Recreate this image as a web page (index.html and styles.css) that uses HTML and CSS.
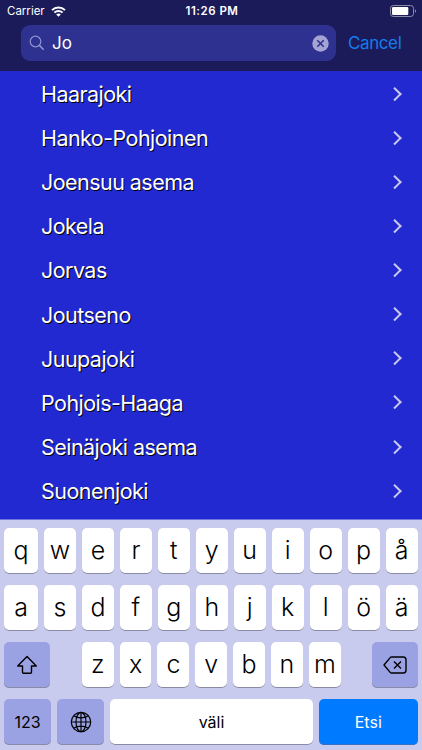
FILE: index.html
```
<!DOCTYPE html>
<html lang="fi">

<head>
    <meta charset="UTF-8">
    <title>Asemat</title>
    <link rel="stylesheet" href="styles.css">
</head>

<body>
    <header class="header">
        <div class="status-bar">
            <div class="carrier">
                <span>Carrier</span>
                <svg width="15" height="11" viewBox="0 0 15 11" fill="none" stroke="#fff" stroke-width="2">
                    <path d="M1 4.1a9.3 9.3 0 0 1 13 0M3.4 6.6a5.9 5.9 0 0 1 8.2 0" />
                    <path d="M7.5 10.8L5.2 8.5a3.3 3.3 0 0 1 4.6 0z" fill="#fff" stroke="none" />
                </svg>
            </div>
            <span class="time">11:26 PM</span>
            <svg class="battery" width="27" height="12" viewBox="0 0 27 12">
                <rect x="0.5" y="0.5" width="23" height="11" rx="2.8" fill="none" stroke="#8b8ca9" />
                <rect x="2" y="2" width="16.3" height="8" rx="1.2" fill="#fff" />
                <path d="M25 4.2a2 2 0 0 1 0 3.6z" fill="#8b8ca9" />
            </svg>
        </div>
        <div class="search-bar">
            <div class="search-field">
                <svg width="16" height="16" viewBox="0 0 16 16" fill="none" stroke="#9092ce" stroke-width="1.2">
                    <circle cx="6.5" cy="6.5" r="5.3" />
                    <path d="M10.4 10.4l4.3 4.3" stroke-width="1.6" />
                </svg>
                <span class="query">Jo</span>
                <svg width="17" height="17" viewBox="0 0 17 17">
                    <circle cx="8.5" cy="8.5" r="8.2" fill="#a3a4d3" />
                    <path d="M5.3 5.3l6.4 6.4M11.7 5.3l-6.4 6.4" stroke="#2e318e" stroke-width="1.6" />
                </svg>
            </div>
            <span class="cancel">Cancel</span>
        </div>
    </header>

    <ul class="stations">
        <li>Haarajoki</li>
        <li>Hanko-Pohjoinen</li>
        <li>Joensuu asema</li>
        <li>Jokela</li>
        <li>Jorvas</li>
        <li>Joutseno</li>
        <li>Juupajoki</li>
        <li>Pohjois-Haaga</li>
        <li>Seinäjoki asema</li>
        <li>Suonenjoki</li>
    </ul>

    <div class="keyboard">
        <div class="keys">
            <div class="key">q</div>
            <div class="key">w</div>
            <div class="key">e</div>
            <div class="key">r</div>
            <div class="key">t</div>
            <div class="key">y</div>
            <div class="key">u</div>
            <div class="key">i</div>
            <div class="key">o</div>
            <div class="key">p</div>
            <div class="key">å</div>
        </div>
        <div class="keys">
            <div class="key">a</div>
            <div class="key">s</div>
            <div class="key">d</div>
            <div class="key">f</div>
            <div class="key">g</div>
            <div class="key">h</div>
            <div class="key">j</div>
            <div class="key">k</div>
            <div class="key">l</div>
            <div class="key">ö</div>
            <div class="key">ä</div>
        </div>
        <div class="keys keys-bottom">
            <div class="key special">
                <svg width="22" height="20" viewBox="0 0 22 20" fill="none" stroke="#000" stroke-width="1.4" stroke-linejoin="round">
                    <path d="M11 1.5L20.3 11h-4.8v6.2a1 1 0 0 1-1 1h-7a1 1 0 0 1-1-1V11H1.7z" />
                </svg>
            </div>
            <div class="letters">
                <div class="key">z</div>
                <div class="key">x</div>
                <div class="key">c</div>
                <div class="key">v</div>
                <div class="key">b</div>
                <div class="key">n</div>
                <div class="key">m</div>
            </div>
            <div class="key special">
                <svg width="24" height="18" viewBox="0 0 24 18" fill="none" stroke="#000" stroke-width="1.4" stroke-linejoin="round">
                    <path d="M8.6 1h11.6a2.8 2.8 0 0 1 2.8 2.8v10.4a2.8 2.8 0 0 1-2.8 2.8H8.6a2 2 0 0 1-1.4-.6L1 9l6.2-7.4A2 2 0 0 1 8.6 1z" />
                    <path d="M11 5.5l7 7M18 5.5l-7 7" />
                </svg>
            </div>
        </div>
        <div class="keys keys-actions">
            <div class="key special small">123</div>
            <div class="key special">
                <svg width="22" height="22" viewBox="0 0 22 22" fill="none" stroke="#000" stroke-width="1.2">
                    <circle cx="11" cy="11" r="9.7" />
                    <ellipse cx="11" cy="11" rx="5" ry="9.7" />
                    <path d="M11 1.3v19.4M1.3 11h19.4M3.7 4.7c4 3 10.6 3 14.6 0M3.7 17.3c4-3 10.6-3 14.6 0" />
                </svg>
            </div>
            <div class="key small">väli</div>
            <div class="key search small">Etsi</div>
        </div>
    </div>
</body>
</html>
```
FILE: styles.css
```
* {
    box-sizing: border-box;
}

body {
    display: flex;
    flex-direction: column;
    height: 750px;
    margin: 0;
    overflow: hidden;
    background-color: #2229d1;
    font-family: Inter, "Liberation Sans", sans-serif;
}

svg {
    display: block;
    flex: none;
}

.header {
    height: 71px;
    background-color: #1a1b58;
    color: white;
}

.status-bar {
    display: grid;
    grid-template-columns: 1fr auto 1fr;
    align-items: center;
    height: 22px;
    padding: 0 5px 0 7px;
    font-size: 11.5px;
}

.carrier {
    display: flex;
    align-items: center;
    gap: 6px;
}

.time {
    font-weight: 600;
    letter-spacing: 0.5px;
}

.battery {
    justify-self: end;
}

.search-bar {
    display: flex;
    align-items: center;
    padding: 3px 20px 0 21px;
}

.search-field {
    display: flex;
    flex: none;
    align-items: center;
    width: 315px;
    height: 36px;
    padding: 0 7px 0 8px;
    border-radius: 9px;
    background-color: #2e318f;
}

.query {
    flex: 1;
    padding-left: 7px;
    font-size: 17px;
}

.cancel {
    margin-left: 12px;
    color: #167bed;
    font-size: 17px;
    letter-spacing: -0.4px;
}

.stations {
    flex: 1;
    margin: 0;
    padding: 1px 0 0;
    list-style: none;
}

.stations li {
    display: flex;
    align-items: center;
    justify-content: space-between;
    height: 44.1px;
    padding: 0 23px 0 41px;
    color: white;
    font-size: 21.5px;
    letter-spacing: -0.55px;
    text-shadow: 1px 1px 0 black;
}

.stations li::after {
    content: "";
    width: 7.5px;
    height: 7.5px;
    margin-bottom: 1px;
    border: solid #c8caf3;
    border-width: 2px 2px 0 0;
    transform: rotate(45deg);
}

.keyboard {
    display: flex;
    flex-direction: column;
    gap: 11px;
    height: 231px;
    padding: 8px 4.5px 0 4px;
    border-top: 1px solid #6f74df;
    background-color: #c9cbee;
}

.keys {
    display: grid;
    grid-template-columns: 34px repeat(10, 1fr);
    gap: 6px;
}

.key {
    display: flex;
    align-items: center;
    justify-content: center;
    height: 46px;
    padding-bottom: 3px;
    border-radius: 5px;
    background-color: white;
    box-shadow: inset 0 -1px #898ba6;
    font-size: 25px;
    font-weight: 350;
}

.keys-bottom {
    grid-template-columns: 46px 260px 46px;
    justify-content: space-between;
}

.letters {
    display: grid;
    grid-template-columns: repeat(7, 1fr);
    gap: 6px;
    padding-left: 1px;
}

.keys-actions {
    grid-template-columns: 47px 47px 203px 1fr;
    gap: 6px;
}

.special {
    padding-bottom: 0;
    background-color: #9ba2e3;
}

.small {
    padding-bottom: 1px;
    font-size: 16px;
    font-weight: 400;
}

.search {
    background-color: #007aff;
    box-shadow: inset 0 -1px #3a6fc0;
    color: white;
}
```
